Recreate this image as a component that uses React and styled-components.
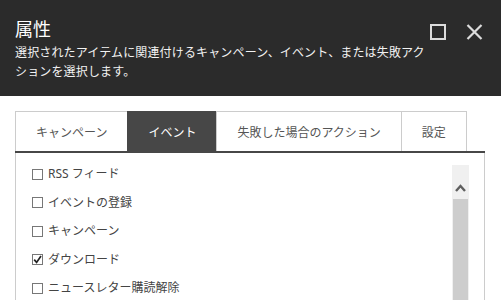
import React from 'react';
import styled, { createGlobalStyle } from 'styled-components';

const GlobalStyle = createGlobalStyle`
    html, body {
        margin: 0;
        padding: 0;
        background: #ffffff;
    }
    body {
        width: 501px;
        height: 300px;
        overflow: hidden;
        font-family: "Noto Sans", "Noto Sans CJK JP", sans-serif;
    }
`;

const tabs = ['キャンペーン', 'イベント', '失敗した場合のアクション', '設定'];

const items = [
    { label: 'RSS フィード', checked: false },
    { label: 'イベントの登録', checked: false },
    { label: 'キャンペーン', checked: false },
    { label: 'ダウンロード', checked: true },
    { label: 'ニュースレター購読解除', checked: false },
];

const App = () => {
    return (
        <Page>
            <GlobalStyle />
            <Header>
                <TitleRow>
                    <Title>属性</Title>
                    <Actions>
                        <IconButton aria-label="最大化">
                            <svg width="16" height="16" viewBox="0 0 16 16">
                                <rect x="1" y="1" width="14" height="14" fill="none" stroke="#dcdcdc" strokeWidth="2" />
                            </svg>
                        </IconButton>
                        <IconButton aria-label="閉じる">
                            <svg width="17" height="16" viewBox="0 0 17 16">
                                <path d="M1.5 1 L15.5 15 M15.5 1 L1.5 15" stroke="#dcdcdc" strokeWidth="2.2" fill="none" />
                            </svg>
                        </IconButton>
                    </Actions>
                </TitleRow>
                <Description>
                    選択されたアイテムに関連付けるキャンペーン、イベント、または失敗アク<br />ションを選択します。
                </Description>
            </Header>

            <Panel>
                <TabBar>
                    {tabs.map((t, i) => (
                        <Tab key={t} active={i === 1} last={i === tabs.length - 1}>{t}</Tab>
                    ))}
                </TabBar>
                <Content>
                    <List>
                        {items.map((it) => (
                            <Row key={it.label}>
                                <Box>
                                    {it.checked && (
                                        <svg width="9" height="9" viewBox="0 0 9 9">
                                            <path d="M1.2 4.6 L3.6 7.4 L8 1" stroke="#222" strokeWidth="1.7" fill="none" />
                                        </svg>
                                    )}
                                </Box>
                                <Label>{it.label}</Label>
                            </Row>
                        ))}
                    </List>
                    <ScrollBar>
                        <ArrowUp>
                            <svg width="11" height="8" viewBox="0 0 11 8">
                                <path d="M1 7 L5.5 2 L10 7" stroke="#5f5f5f" strokeWidth="2.4" fill="none" />
                            </svg>
                        </ArrowUp>
                        <Thumb />
                    </ScrollBar>
                </Content>
            </Panel>
        </Page>
    );
}

const Page = styled.div`
    width: 501px;
    height: 300px;
    display: flex;
    flex-direction: column;
    background: #ffffff;
`;

const Header = styled.header`
    background: #2b2b2b;
    height: 96px;
    box-sizing: border-box;
    padding: 17px 18px 0 15px;
`;

const TitleRow = styled.div`
    display: flex;
    align-items: center;
    justify-content: space-between;
    height: 24px;
`;

const Title = styled.h1`
    margin: 0;
    font-size: 18px;
    line-height: 24px;
    font-weight: normal;
    color: #ffffff;
`;

const Actions = styled.div`
    display: flex;
    align-items: center;
    gap: 19px;
    margin-top: 5px;
`;

const IconButton = styled.span`
    display: flex;
    width: 17px;
    height: 16px;
`;

const Description = styled.p`
    margin: 2px 0 0;
    font-size: 12px;
    line-height: 19px;
    letter-spacing: 0.15px;
    color: #f2f2f2;
    white-space: nowrap;
`;

const Panel = styled.section`
    flex: 1;
    display: flex;
    flex-direction: column;
    margin: 15px 16px 0 15px;
    min-height: 0;
`;

const TabBar = styled.div`
    display: flex;
    border-bottom: 2px solid #474747;
`;

const Tab = styled.div`
    height: 39px;
    padding: 0 20px;
    display: flex;
    align-items: center;
    font-size: 12px;
    color: ${p => (p.active ? '#ffffff' : '#555555')};
    background: ${p => (p.active ? '#474747' : '#ffffff')};
    border-top: 1px solid ${p => (p.active ? '#474747' : '#cccccc')};
    border-left: 1px solid ${p => (p.active ? '#474747' : '#cccccc')};
    border-right: ${p => (p.last ? '1px solid #cccccc' : 'none')};
`;

const Content = styled.div`
    flex: 1;
    display: flex;
    border-left: 1px solid #cccccc;
    border-right: 1px solid #cccccc;
    min-height: 0;
`;

const List = styled.div`
    flex: 1;
    padding: 7px 0 0 16px;
`;

const Row = styled.label`
    display: flex;
    align-items: center;
    height: 28.5px;
    gap: 5px;
`;

const Box = styled.span`
    width: 9px;
    height: 9px;
    border: 1px solid #777777;
    display: flex;
    align-items: center;
    justify-content: center;
    background: #ffffff;
`;

const Label = styled.span`
    font-size: 12px;
    color: #444444;
    line-height: 16px;
`;

const ScrollBar = styled.div`
    width: 17px;
    margin: 12px 15px 0 0;
    background: #f0f0f0;
    display: flex;
    flex-direction: column;
`;

const ArrowUp = styled.div`
    height: 34px;
    display: flex;
    align-items: flex-end;
    justify-content: center;
    padding-bottom: 7px;
    box-sizing: border-box;
`;

const Thumb = styled.div`
    flex: 1;
    margin: 0 1px;
    background: #cdcdcd;
`;

export default App;
